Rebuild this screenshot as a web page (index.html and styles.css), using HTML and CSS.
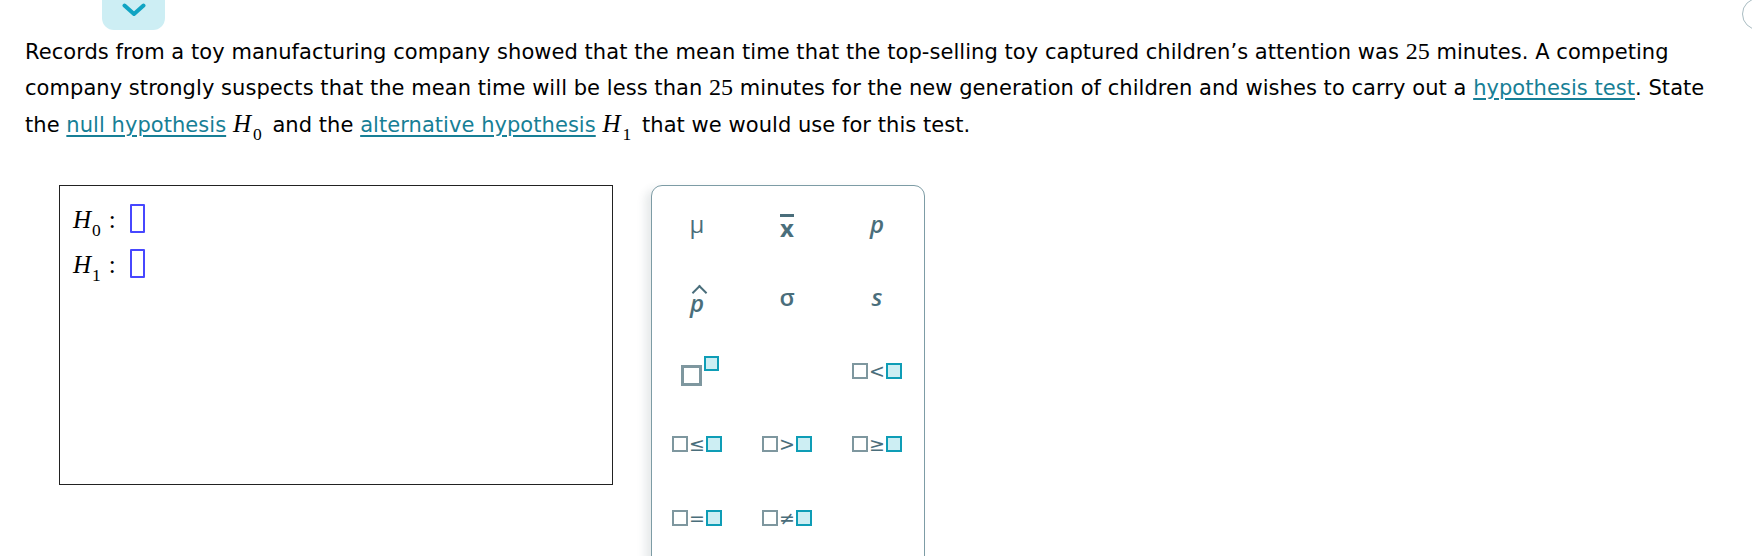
FILE: index.html
```html
<!DOCTYPE html>
<html lang="en">
<head>
<meta charset="utf-8">
<title>Hypothesis test</title>
<link rel="stylesheet" href="styles.css">
</head>
<body>
<div class="page">
  <div class="topbar">
    <button class="collapse" aria-label="Collapse">
      <svg width="24" height="14" viewBox="0 0 24 14"><polyline points="2.5,2.5 12,11 21.5,2.5" fill="none" stroke="#10a4c3" stroke-width="4" stroke-linecap="round" stroke-linejoin="round"/></svg>
    </button>
  </div>
  <span class="corner-circle"></span>

  <p class="question">Records from a toy manufacturing company showed that the mean time that the top-selling toy captured children’s attention was <span class="mn">25</span> minutes. A competing company strongly suspects that the mean time will be less than <span class="mn">25</span> minutes for the new generation of children and wishes to carry out a <a class="term" href="#">hypothesis test</a>. State the <a class="term" href="#">null hypothesis</a> <span class="math"><i>H</i><span class="sub">0</span></span> and the <a class="term" href="#">alternative hypothesis</a> <span class="math"><i>H</i><span class="sub">1</span></span> that we would use for this test.</p>

  <div class="work">
    <div class="answer">
      <div class="hrow"><i>H</i><span class="sub">0</span><span class="colon">:</span><span class="slot"></span></div>
      <div class="hrow"><i>H</i><span class="sub">1</span><span class="colon">:</span><span class="slot"></span></div>
    </div>

    <div class="palette">
      <div class="key"><span class="sym mu">μ</span></div>
      <div class="key"><span class="sym bar">x</span></div>
      <div class="key"><span class="sym it">p</span></div>

      <div class="key"><span class="sym it hat">p</span></div>
      <div class="key"><span class="sym">σ</span></div>
      <div class="key"><span class="sym it">s</span></div>

      <div class="key"><span class="power"><span class="gbox big"></span><span class="cbox"></span></span></div>
      <div class="key"></div>
      <div class="key"><span class="rel"><span class="gbox"></span><span class="op">&lt;</span><span class="cbox"></span></span></div>

      <div class="key"><span class="rel"><span class="gbox"></span><span class="op">≤</span><span class="cbox"></span></span></div>
      <div class="key"><span class="rel"><span class="gbox"></span><span class="op">&gt;</span><span class="cbox"></span></span></div>
      <div class="key"><span class="rel"><span class="gbox"></span><span class="op">≥</span><span class="cbox"></span></span></div>

      <div class="key"><span class="rel"><span class="gbox"></span><span class="op">=</span><span class="cbox"></span></span></div>
      <div class="key"><span class="rel"><span class="gbox"></span><span class="op">≠</span><span class="cbox"></span></span></div>
      <div class="key"></div>
    </div>
  </div>
</div>
</body>
</html>
```

FILE: styles.css
```css
html, body {
  margin: 0;
  padding: 0;
  background: #ffffff;
}

body {
  width: 1752px;
  height: 556px;
  overflow: hidden;
  font-family: "DejaVu Sans", Verdana, sans-serif;
  color: #000;
}

.page {
  position: relative;
  height: 556px;
}

.topbar {
  height: 30px;
  padding-left: 102px;
}

.collapse {
  display: flex;
  align-items: flex-start;
  justify-content: center;
  width: 63px;
  height: 30px;
  margin: 0;
  padding: 3px 0 0 0;
  border: none;
  border-radius: 0 0 12px 12px;
  background: #cdeef4;
  box-sizing: border-box;
}

.corner-circle {
  position: absolute;
  left: 1742px;
  top: -2px;
  width: 32px;
  height: 32px;
  border: 1px solid #a9bcc2;
  border-radius: 50%;
  box-sizing: border-box;
}

.question {
  margin: 4px 0 0 25px;
  width: 1705px;
  font-size: 21px;
  letter-spacing: 0.05px;
  line-height: 35px;
}

.mn {
  font-family: "Liberation Serif", "Times New Roman", serif;
  font-size: 24px;
  letter-spacing: 0;
}

.term {
  color: #177f96;
  text-decoration: underline;
  text-decoration-thickness: 2px;
  text-underline-offset: 3px;
}

.math {
  font-family: "Liberation Serif", "Times New Roman", serif;
  font-size: 25px;
  letter-spacing: 0;
  margin: 0 4px 0 0;
}

.math i {
  font-style: italic;
}

.sub {
  display: inline-block;
  font-size: 0.7em;
  line-height: 0;
  vertical-align: -0.45em;
  margin-left: 2px;
}

.work {
  display: flex;
  align-items: flex-start;
  gap: 38px;
  margin: 42px 0 0 59px;
}

.answer {
  width: 554px;
  height: 300px;
  border: 1px solid #222;
  box-sizing: border-box;
  padding: 11px 13px;
}

.hrow {
  font-family: "Liberation Serif", "Times New Roman", serif;
  font-size: 25px;
  line-height: 45px;
  height: 45px;
  white-space: nowrap;
}

.hrow i {
  font-style: italic;
}

.hrow .sub {
  margin-left: 1px;
}

.colon {
  margin-left: 8px;
}

.slot {
  display: inline-block;
  width: 15px;
  height: 29px;
  border: 2px solid #4747ff;
  border-radius: 1px;
  box-sizing: border-box;
  margin-left: 14px;
  vertical-align: -5px;
}

.palette {
  width: 274px;
  height: 400px;
  border: 1px solid #7d9ca5;
  border-radius: 11px;
  box-sizing: border-box;
  padding: 1px 0 0 0;
  display: grid;
  grid-template-columns: 90px 90px 90px;
  grid-template-rows: repeat(5, 73.5px);
  box-shadow: -6px 4px 9px rgba(60, 80, 90, 0.12);
  background: #fff;
}

.key {
  display: flex;
  align-items: center;
  justify-content: center;
}

.sym {
  font-family: "Open Sans", "DejaVu Sans", sans-serif;
  font-weight: 600;
  font-size: 24px;
  color: #4a6e7b;
  line-height: 1;
}

.sym.mu {
  font-weight: 500;
}

.sym.it {
  font-style: italic;
}

.sym.bar {
  border-top: 3px solid #4a6e7b;
  padding-top: 1px;
  line-height: 0.8;
  font-weight: 700;
  margin-top: 4px;
}

.sym.hat {
  position: relative;
  margin-top: 12px;
}

.sym.hat::before {
  content: "";
  position: absolute;
  left: 4px;
  top: -4px;
  width: 9px;
  height: 9px;
  border-left: 2px solid #4a6e7b;
  border-top: 2px solid #4a6e7b;
  transform: rotate(45deg);
}

.power {
  display: inline-flex;
  align-items: flex-start;
  margin-left: 6px;
}

.gbox {
  display: inline-block;
  width: 16px;
  height: 16px;
  border: 2.5px solid #7e979f;
  background: #fff;
  box-sizing: border-box;
}

.gbox.big {
  width: 21px;
  height: 21px;
  border-width: 3px;
  margin-top: 9px;
}

.cbox {
  display: inline-block;
  width: 16px;
  height: 16px;
  border: 2.5px solid #0e9db6;
  background: #cdeef3;
  box-sizing: border-box;
}

.power .cbox {
  width: 15px;
  height: 15px;
  margin-left: 2px;
}

.rel {
  display: inline-flex;
  align-items: center;
}

.op {
  font-family: "DejaVu Sans", sans-serif;
  font-size: 19px;
  line-height: 16px;
  color: #4a6e7b;
  width: 18px;
  text-align: center;
}
```
